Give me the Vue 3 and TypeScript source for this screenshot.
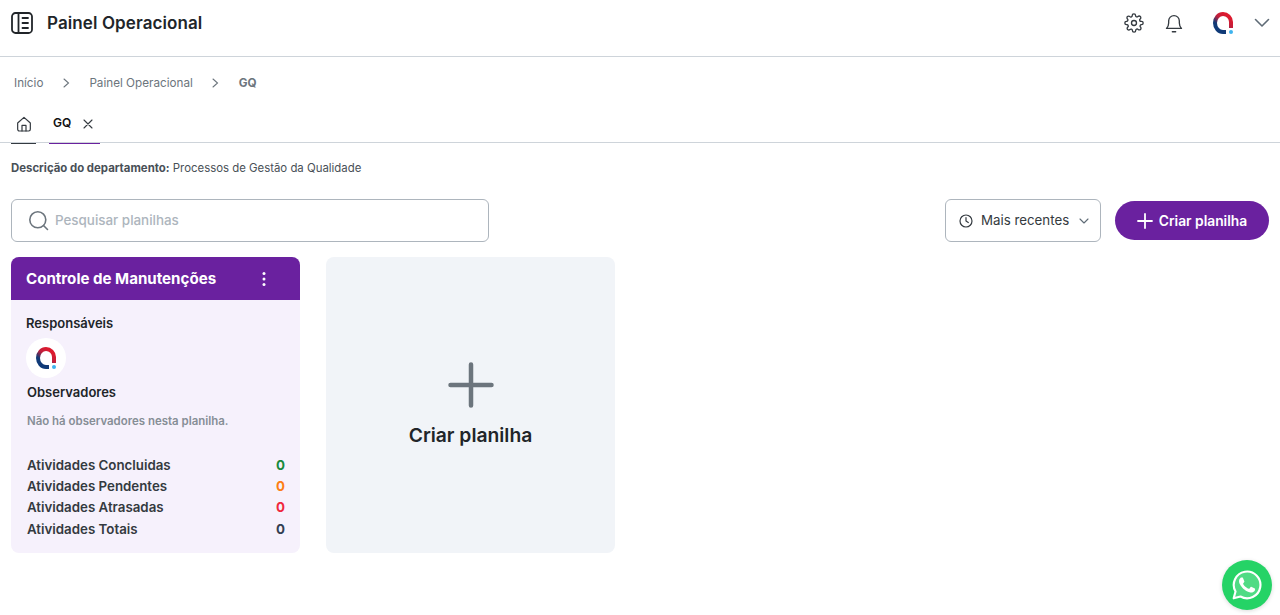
<script setup lang="ts">
interface Stat {
  label: string
  value: number
  color: string
}

const stats: Stat[] = [
  { label: 'Atividades Concluidas', value: 0, color: '#198a3c' },
  { label: 'Atividades Pendentes', value: 0, color: '#fd7e14' },
  { label: 'Atividades Atrasadas', value: 0, color: '#f0283c' },
  { label: 'Atividades Totais', value: 0, color: '#343f52' },
]
</script>

<template>
  <div class="page">
    <header class="topbar">
      <div class="topbar-left">
        <svg class="book" width="24" height="24" viewBox="0 0 24 24" fill="none" stroke="#212529" stroke-width="1.8" stroke-linecap="round" stroke-linejoin="round">
          <rect x="2" y="2" width="20" height="20" rx="3.5" />
          <path d="M8.5 2v20M12.5 7h5.500M12.500 12h5.500M12.500 17h5.500" />
        </svg>
        <h1>Painel Operacional</h1>
      </div>
      <div class="topbar-right">
        <svg class="gear" width="20" height="20" viewBox="0 0 24 24" fill="none" stroke="#343a40" stroke-width="1.6" stroke-linecap="round" stroke-linejoin="round">
          <circle cx="12" cy="12" r="3" />
          <path d="M19.4 15a1.65 1.65 0 0 0 .33 1.82l.06.06a2 2 0 1 1-2.83 2.83l-.06-.06a1.65 1.65 0 0 0-2.82 1.17V21a2 2 0 0 1-4 0v-.09a1.65 1.65 0 0 0-2.82-1.12l-.06.06a2 2 0 1 1-2.83-2.83l.06-.06A1.65 1.65 0 0 0 3.09 14H3a2 2 0 0 1 0-4h.09a1.65 1.65 0 0 0 1.12-2.82l-.06-.06a2 2 0 1 1 2.83-2.83l.06.06A1.65 1.65 0 0 0 9.86 3.09V3a2 2 0 0 1 4 0v.09a1.65 1.65 0 0 0 2.82 1.12l.06-.06a2 2 0 1 1 2.83 2.83l-.06.06A1.65 1.65 0 0 0 20.91 10H21a2 2 0 0 1 0 4h-.09a1.65 1.65 0 0 0-1.51 1z" />
        </svg>
        <svg class="bell" width="20" height="20" viewBox="0 0 24 24" fill="none" stroke="#343a40" stroke-width="1.6" stroke-linecap="round" stroke-linejoin="round">
          <path d="M3 18.5h18c-1.6-1.6-2.6-3-2.6-6.5V9.5a6.4 6.4 0 0 0-12.8 0V12c0 3.5-1 4.900-2.600 6.500z" />
          <path d="M10 22.5h4" />
        </svg>
        <svg class="logo" width="20" height="22" viewBox="0 0 20 22" fill="none">
          <defs>
            <linearGradient id="logoGrad" x1="0.75" y1="0.1" x2="0.2" y2="0.85">
              <stop offset="0" stop-color="#dc1a2e" />
              <stop offset="0.4" stop-color="#c01f3c" />
              <stop offset="0.8" stop-color="#123a74" />
              <stop offset="1" stop-color="#0f3a78" />
            </linearGradient>
          </defs>
          <path d="M13 20H10A8 9 0 0 1 10 2A8 8 0 0 1 18 10V16" stroke="url(#logoGrad)" stroke-width="4" />
          <circle cx="18" cy="20" r="2" fill="#3db3ee" />
        </svg>
        <svg class="caret" width="16" height="10" viewBox="0 0 16 10" fill="none" stroke="#5f6b76" stroke-width="1.6" stroke-linecap="round" stroke-linejoin="round">
          <path d="M1.5 1.5 8 8l6.500-6.500" />
        </svg>
      </div>
    </header>

    <nav class="crumbs">
      <span>Início</span>
      <svg width="7" height="10" viewBox="0 0 7 10" fill="none" stroke="#6c757d" stroke-width="1.1" stroke-linecap="round"><path d="m1 1 4.500 4L1 9" /></svg>
      <span>Painel Operacional</span>
      <svg width="7" height="10" viewBox="0 0 7 10" fill="none" stroke="#6c757d" stroke-width="1.1" stroke-linecap="round"><path d="m1 1 4.500 4L1 9" /></svg>
      <strong>GQ</strong>
    </nav>

    <div class="tabs">
      <div class="tab tab-home">
        <svg width="16" height="16" viewBox="0 0 24 24" fill="none" stroke="#343a40" stroke-width="1.8" stroke-linecap="round" stroke-linejoin="round">
          <path d="M2.500 10.500 12 2l9.500 8.500V20a2.500 2.500 0 0 1-2.500 2.500H5A2.500 2.500 0 0 1 2.500 20z" />
          <path d="M9 22.500V14h6v8.500" />
        </svg>
      </div>
      <div class="tab tab-active">
        <span class="lift">GQ</span>
        <svg width="10" height="10" viewBox="0 0 10 10" fill="none" stroke="#343a40" stroke-width="1.1" stroke-linecap="round"><path d="m1 1 8 8M9 1 1 9" /></svg>
      </div>
    </div>

    <main class="content">
      <p class="desc"><b>Descrição do departamento:</b> Processos de Gestão da Qualidade</p>

      <div class="toolbar">
        <label class="search">
          <svg width="21" height="21" viewBox="0 0 21 21" fill="none" stroke="#6c757d" stroke-width="1.6" stroke-linecap="round">
            <circle cx="9.800" cy="9.800" r="8" />
            <path d="m15.500 15.500 4 4" />
          </svg>
          <input class="lift" type="text" placeholder="Pesquisar planilhas" />
        </label>
        <div class="toolbar-right">
          <button class="sort">
            <svg width="14" height="14" viewBox="0 0 14 14" fill="none" stroke="#343a40" stroke-width="1.2" stroke-linecap="round" stroke-linejoin="round">
              <circle cx="7" cy="7" r="6" />
              <path d="M7 3.500V7l2.300 1.500" />
            </svg>
            <span class="lift">Mais recentes</span>
            <svg class="sort-caret" width="10" height="6" viewBox="0 0 10 6" fill="none" stroke="#5f6b76" stroke-width="1.1" stroke-linecap="round" stroke-linejoin="round"><path d="m1 1 4 4 4-4" /></svg>
          </button>
          <button class="create">
            <svg width="16" height="16" viewBox="0 0 16 16" fill="none" stroke="#fff" stroke-width="1.8" stroke-linecap="round"><path d="M8 1v14M1 8h14" /></svg>
            <span>Criar planilha</span>
          </button>
        </div>
      </div>

      <div class="cards">
        <article class="card">
          <div class="card-head">
            <h2>Controle de Manutenções</h2>
            <svg width="4" height="16" viewBox="0 0 4 16" fill="#fff"><circle cx="2" cy="2.500" r="1.500" /><circle cx="2" cy="8" r="1.500" /><circle cx="2" cy="13.500" r="1.500" /></svg>
          </div>
          <div class="card-body">
            <h3 class="resp">Responsáveis</h3>
            <div class="avatar">
              <svg width="20" height="22" viewBox="0 0 20 22" fill="none">
                <path d="M13 20H10A8 9 0 0 1 10 2A8 8 0 0 1 18 10V16" stroke="url(#logoGrad)" stroke-width="4" />
                <circle cx="18" cy="20" r="2" fill="#3db3ee" />
              </svg>
            </div>
            <h3 class="obs">Observadores</h3>
            <p class="empty">Não há observadores nesta planilha.</p>
            <ul class="stats">
              <li v-for="stat in stats" :key="stat.label">
                <span>{{ stat.label }}</span>
                <b :style="{ color: stat.color }">{{ stat.value }}</b>
              </li>
            </ul>
          </div>
        </article>

        <button class="card-new">
          <svg width="46" height="46" viewBox="0 0 46 46" fill="none" stroke="#6c757d" stroke-width="4.500" stroke-linecap="round"><path d="M23 2.500v41M2.500 23h41" /></svg>
          <span>Criar planilha</span>
        </button>
      </div>
    </main>

    <a class="whats">
      <svg width="32" height="32" viewBox="0 0 24 24">
        <path fill="rgba(255,255,255,0.2)" stroke="#fff" stroke-width="1.6" stroke-linejoin="round" d="M2 22l1.400-5.100A10 10 0 1 1 7.100 20.600z" />
        <path fill="#fff" d="M17.472 14.382c-.297-.149-1.758-.867-2.03-.967-.273-.099-.471-.148-.67.15-.197.297-.767.966-.94 1.164-.173.199-.347.223-.644.075-.297-.15-1.255-.463-2.39-1.475-.883-.788-1.48-1.761-1.653-2.059-.173-.297-.018-.458.13-.606.134-.133.298-.347.446-.52.149-.174.198-.298.298-.497.099-.198.05-.371-.025-.52-.075-.149-.669-1.612-.916-2.207-.242-.579-.487-.5-.669-.51-.173-.008-.371-.01-.57-.01-.198 0-.52.074-.792.372-.272.297-1.04 1.016-1.04 2.479 0 1.462 1.065 2.875 1.213 3.074.149.198 2.096 3.2 5.077 4.487.709.306 1.262.489 1.694.625.712.227 1.36.195 1.871.118.571-.085 1.758-.719 2.006-1.413.248-.694.248-1.289.173-1.413-.074-.124-.272-.198-.57-.347z" />
      </svg>
    </a>
  </div>
</template>

<style>
html,
body {
  margin: 0;
  background: #fff;
}
</style>

<style scoped>
.page {
  position: relative;
  height: 615px;
  overflow: hidden;
  font-family: Inter, "Noto Sans", sans-serif;
  color: #212529;
}

.lift {
  margin-top: -2px;
}

.topbar {
  height: 46px;
  display: flex;
  align-items: center;
  justify-content: space-between;
  padding: 0 10px 10px;
  border-bottom: 1px solid #ced4da;
}

.topbar-left {
  display: flex;
  align-items: center;
  gap: 13px;
}

.topbar-left h1 {
  margin: 0;
  font-size: 17px;
  font-weight: 600;
  letter-spacing: 0.1px;
}

.topbar-right {
  display: flex;
  align-items: center;
}

.gear {
  margin-right: 20px;
}

.bell {
  margin-right: 29px;
}

.logo {
  margin-right: 21px;
}

.crumbs {
  height: 50px;
  box-sizing: border-box;
  display: flex;
  align-items: center;
  padding: 1px 14px 0;
  gap: 19.5px;
  font-size: 11.7px;
  color: #6c757d;
}

.crumbs strong {
  font-weight: 700;
}

.tabs {
  height: 35px;
  display: flex;
  align-items: flex-start;
  padding: 0 11px;
  gap: 13px;
  border-bottom: 1px solid #ced4da;
}

.tab {
  display: flex;
  align-items: center;
  box-sizing: border-box;
  height: 37px;
  padding-bottom: 3px;
}

.tab-home {
  width: 25px;
  justify-content: center;
  border-bottom: 1px solid #343a40;
}

.tab-active {
  width: 51px;
  padding-left: 4px;
  gap: 12px;
  font-size: 12px;
  font-weight: 600;
  color: #111;
  border-bottom: 1px solid #6a219f;
}

.content {
  padding: 0 11px;
}

.desc {
  margin: 0;
  height: 50px;
  padding-bottom: 6px;
  display: flex;
  align-items: center;
  font-size: 11.4px;
  color: #495057;
  white-space: pre;
}

.desc b {
  font-weight: 700;
}

.toolbar {
  height: 58px;
  display: flex;
  justify-content: space-between;
}

.search {
  width: 478px;
  height: 43px;
  box-sizing: border-box;
  display: flex;
  align-items: center;
  gap: 6px;
  padding-left: 16px;
  border: 1px solid #adb5bd;
  border-radius: 6px;
}

.search input {
  flex: 1;
  border: 0;
  outline: 0;
  background: none;
  padding: 0;
  font: 500 13.4px Inter, "Noto Sans", sans-serif;
}

.search input::placeholder {
  color: #adb5bd;
  opacity: 1;
}

.toolbar-right {
  display: flex;
  align-items: flex-start;
  gap: 14px;
}

.sort {
  width: 156px;
  height: 43px;
  box-sizing: border-box;
  display: flex;
  align-items: center;
  gap: 8px;
  padding: 0 0 0 13px;
  background: #fff;
  border: 1px solid #adb5bd;
  border-radius: 6px;
  font: 400 13.3px Inter, "Noto Sans", sans-serif;
  color: #343a40;
}

.sort-caret {
  margin-left: 2px;
}

.create {
  width: 154px;
  height: 39px;
  margin: 2px 0 0;
  display: flex;
  align-items: center;
  justify-content: center;
  gap: 6px;
  border: 0;
  border-radius: 20px;
  background: #6a219f;
  color: #fff;
  font: 600 13.8px Inter, "Noto Sans", sans-serif;
}

.cards {
  display: flex;
  gap: 26px;
}

.card,
.card-new {
  width: 289px;
  height: 296px;
  border-radius: 8px;
}

.card {
  overflow: hidden;
  background: #f6f1fc;
}

.card-head {
  height: 43px;
  display: flex;
  align-items: center;
  justify-content: space-between;
  padding: 0 34px 0 15px;
  background: #6a219f;
  color: #fff;
}

.card-head h2 {
  margin: 0;
  font-size: 15.1px;
  font-weight: 700;
}

.card-body {
  padding: 15px 15px 0;
}

.card-body h3 {
  margin: 0;
  font-size: 13px;
  line-height: 16px;
  font-weight: 600;
}

.avatar {
  width: 40px;
  height: 40px;
  margin: 7px 0 6px;
  border-radius: 50%;
  background: #fff;
  display: flex;
  align-items: center;
  justify-content: center;
}

.obs {
  padding-left: 1px;
}

.empty {
  margin: 13px 0 25px 1px;
  font-size: 11.45px;
  line-height: 16px;
  font-weight: 600;
  color: #868e96;
}

.stats {
  list-style: none;
  margin: 0;
  padding: 0 0 0 1px;
  font-size: 13.3px;
  font-weight: 600;
  color: #343a40;
}

.stats li {
  height: 21.33px;
  display: flex;
  align-items: center;
  justify-content: space-between;
}

.stats b {
  font-weight: 700;
}

.card-new {
  border: 0;
  padding: 0 0 2px;
  background: #f1f4f8;
  display: flex;
  flex-direction: column;
  align-items: center;
  justify-content: center;
  gap: 15px;
  font: 600 19.3px Inter, "Noto Sans", sans-serif;
  color: #212529;
}

.whats {
  position: absolute;
  left: 1222px;
  top: 560px;
  width: 50px;
  height: 50px;
  border-radius: 50%;
  background: #25d366;
  box-shadow: 0 1px 4px rgba(0, 0, 0, 0.15);
  display: flex;
  align-items: center;
  justify-content: center;
}
</style>
